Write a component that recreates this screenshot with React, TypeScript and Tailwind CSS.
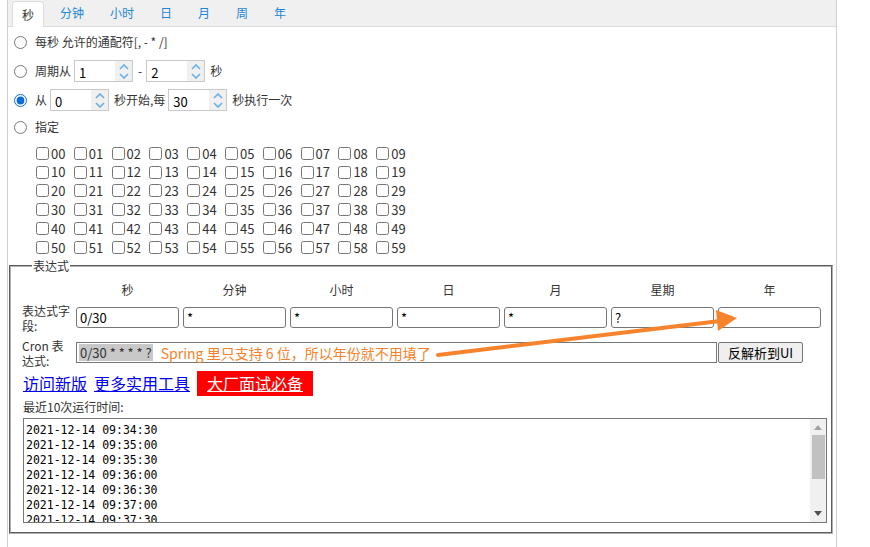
import React from 'react';

const tabs = ['秒', '分钟', '小时', '日', '月', '周', '年'];

const fields = [
    { name: '秒', value: '0/30' },
    { name: '分钟', value: '*' },
    { name: '小时', value: '*' },
    { name: '日', value: '*' },
    { name: '月', value: '*' },
    { name: '星期', value: '?' },
    { name: '年', value: '' },
];

const runs = [
    '2021-12-14 09:34:30',
    '2021-12-14 09:35:00',
    '2021-12-14 09:35:30',
    '2021-12-14 09:36:00',
    '2021-12-14 09:36:30',
    '2021-12-14 09:37:00',
    '2021-12-14 09:37:30',
    '2021-12-14 09:38:00',
    '2021-12-14 09:38:30',
    '2021-12-14 09:39:00',
];

const seconds = Array.from({ length: 60 }, (_, i) => String(i).padStart(2, '0'));

function Spinner({ value }: { value: string }) {
    return (
        <div className="flex h-[22px] w-[59px] border border-[#c9c9c9] bg-white">
            <span className="flex-1 pl-[4px] pt-[3px] text-[13px] leading-[18px] text-black">{value}</span>
            <span className="flex w-[17px] flex-col items-center justify-center gap-[3px] bg-[#f0f0f0]">
                <svg width="10" height="6" viewBox="0 0 10 6">
                    <path d="M1 5 L5 1 L9 5" fill="none" stroke="#6aaee6" strokeWidth="1.6" />
                </svg>
                <svg width="10" height="6" viewBox="0 0 10 6">
                    <path d="M1 1 L5 5 L9 1" fill="none" stroke="#6aaee6" strokeWidth="1.6" />
                </svg>
            </span>
        </div>
    );
}

function Radio({ checked }: { checked?: boolean }) {
    return (
        <input
            type="radio"
            name="sec"
            defaultChecked={checked}
            className="m-0 ml-[6px] mr-[8px] h-[13px] w-[13px] accent-[#0a6cd8]"
        />
    );
}

export default function App() {
    return (
        <div className="relative h-[547px] w-[870px] overflow-hidden bg-white font-['Noto_Sans_CJK_SC',sans-serif] text-[#333]">
            <div className="ml-[7px] min-h-[547px] w-[830px] border-x border-[#cfcfcf]">
                {/* Tabs */}
                <div className="flex h-[27px] items-end border-b border-[#dcdcdc] bg-[#f0f0f0]">
                    {tabs.map((t, i) =>
                        i === 0 ? (
                            <div
                                key={t}
                                className="-mb-px ml-[4px] mr-[3px] flex h-[26px] w-[32px] items-center justify-center rounded-t-[4px] border border-b-0 border-[#dcdcdc] bg-white text-[12px] text-[#333]"
                            >
                                {t}
                            </div>
                        ) : (
                            <div key={t} className="flex h-[26px] items-center px-[13px] text-[12px] text-[#1f87d6]">
                                {t}
                            </div>
                        )
                    )}
                </div>

                {/* Options */}
                <div className="mt-[5px] flex h-[20px] items-center text-[12px]">
                    <Radio />
                    <span>每秒 允许的通配符[, - * /]</span>
                </div>
                <div className="mt-[7px] flex h-[24px] items-center text-[12px]">
                    <Radio />
                    <span>周期从</span>
                    <span className="ml-[3px]"><Spinner value="1" /></span>
                    <span className="ml-[5px]">-</span>
                    <span className="ml-[4px]"><Spinner value="2" /></span>
                    <span className="ml-[5px]">秒</span>
                </div>
                <div className="mt-[5px] flex h-[24px] items-center text-[12px]">
                    <Radio checked />
                    <span>从</span>
                    <span className="ml-[3px]"><Spinner value="0" /></span>
                    <span className="ml-[5px]">秒开始,每</span>
                    <span className="ml-[3px]"><Spinner value="30" /></span>
                    <span className="ml-[5px]">秒执行一次</span>
                </div>
                <div className="mt-[5px] flex h-[20px] items-center text-[12px]">
                    <Radio />
                    <span>指定</span>
                </div>

                {/* Seconds grid */}
                <div className="mt-[7px] grid w-[406px] grid-cols-10 pl-[28px]">
                    {seconds.map((s) => (
                        <label key={s} className="flex h-[18.8px] w-[37.8px] items-center text-[13px]">
                            <input type="checkbox" className="m-0 mr-[2px] h-[13px] w-[13px]" />
                            <span>{s}</span>
                        </label>
                    ))}
                </div>

                {/* Expression */}
                <fieldset className="ml-[1px] mt-[1px] w-[824px] min-w-0 border-2 border-[#b0b0b0] px-[11px] pb-[9px] [border-style:groove]">
                    <legend className="ml-[10px] px-px text-[12px] leading-[16px]">表达式</legend>

                    <div className="mt-[8px] grid grid-cols-[50px_repeat(7,103px)] gap-x-[4px] text-[12px]">
                        <span />
                        {fields.map((f) => (
                            <span key={f.name} className="h-[16px] text-center leading-[16px]">
                                {f.name}
                            </span>
                        ))}
                    </div>

                    <div className="mt-[5px] grid h-[30px] grid-cols-[50px_repeat(7,103px)] items-center gap-x-[4px]">
                        <span className="text-[12px] leading-[15px]">表达式字段:</span>
                        {fields.map((f) => (
                            <div
                                key={f.name}
                                className="flex h-[21px] items-center rounded-[3px] border border-[#767676] bg-white pl-[3px] text-[13px] text-black"
                            >
                                {f.value}
                            </div>
                        ))}
                    </div>

                    <div className="mt-[5px] flex h-[30px] items-center">
                        <span className="w-[50px] text-[12px] leading-[15px]">Cron 表达式:</span>
                        <div className="ml-[4px] flex h-[21px] w-[641px] items-center border border-[#767676] bg-white pl-[2px]">
                            <span className="bg-[#c8c8c8] px-px text-[13px] leading-[17px] text-[#333]">0/30 * * * * ?</span>
                            <span className="ml-[8px] text-[14px] leading-[18px] text-[#f5822a]">
                                Spring 里只支持 6 位，所以年份就不用填了
                            </span>
                        </div>
                        <button className="ml-px flex h-[21px] w-[85px] items-center justify-center rounded-[2px] border border-[#767676] bg-[#efefef] text-[13px] text-black">
                            反解析到UI
                        </button>
                    </div>

                    <div className="ml-px mt-[3px] flex h-[25px] items-center text-[16px]">
                        <a href="#" className="text-[#0000ee] underline">访问新版</a>
                        <a href="#" className="ml-[7px] text-[#0000ee] underline">更多实用工具</a>
                        <a href="#" className="ml-[7px] flex h-[25px] w-[116px] items-center justify-center bg-[#ff0000] text-white underline">
                            大厂面试必备
                        </a>
                    </div>

                    <div className="ml-px mt-[4px] h-[14px] text-[12px] leading-[14px]">最近10次运行时间:</div>

                    <div className="ml-px mt-[4px] flex h-[105px] w-[804px] overflow-hidden border border-[#767676] bg-white">
                        <div className="flex-1 overflow-hidden pl-[2px] pt-[4px] font-['DejaVu_Sans_Mono',monospace] text-[11.5px] leading-[15px] text-black">
                            {runs.map((r) => (
                                <div key={r} className="whitespace-pre">{r}</div>
                            ))}
                        </div>
                        <div className="flex w-[16px] flex-col items-center bg-[#f0f0f0]">
                            <svg width="8" height="5" viewBox="0 0 8 5" className="mt-[6px]">
                                <path d="M0 5 L4 0 L8 5 Z" fill="#a3a3a3" />
                            </svg>
                            <div className="mt-[5px] h-[44px] w-[13px] bg-[#c1c1c1]" />
                            <div className="flex-1" />
                            <svg width="8" height="5" viewBox="0 0 8 5" className="mb-[6px]">
                                <path d="M0 0 L8 0 L4 5 Z" fill="#505050" />
                            </svg>
                        </div>
                    </div>
                </fieldset>
            </div>

            {/* Annotation arrow */}
            <svg className="pointer-events-none absolute left-0 top-0" width="870" height="547" viewBox="0 0 870 547">
                <line x1="438" y1="355" x2="720" y2="321" stroke="#f7842c" strokeWidth="4" strokeLinecap="round" />
                <polygon points="737,318 716,310 718,331" fill="#f7842c" />
            </svg>
        </div>
    );
}
